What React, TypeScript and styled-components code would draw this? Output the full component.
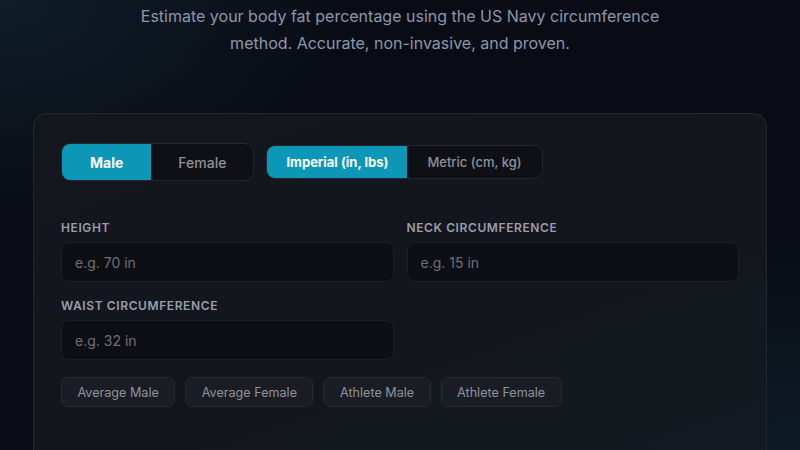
import React, { useState } from 'react';
import styled, { createGlobalStyle } from 'styled-components';

const GlobalStyle = createGlobalStyle`
    html, body {
        margin: 0;
        padding: 0;
        height: 100%;
    }
    body {
        font-family: Inter, 'Noto Sans', 'Liberation Sans', sans-serif;
        background: #0a0d16;
        overflow: hidden;
    }
`;

const Page = styled.div`
    width: 800px;
    height: 450px;
    box-sizing: border-box;
    padding-top: 3px;
    background:
        radial-gradient(ellipse 500px 300px at 0% 0%, rgba(20, 44, 56, 0.55), transparent 70%),
        radial-gradient(ellipse 500px 300px at 100% 100%, rgba(18, 42, 54, 0.5), transparent 70%),
        #090c15;
    display: flex;
    flex-direction: column;
    align-items: center;
`;

const Subtitle = styled.p`
    margin: 0;
    width: 560px;
    text-align: center;
    font-size: 16px;
    line-height: 27px;
    color: #8b97aa;
`;

const Card = styled.div`
    margin-top: 56px;
    width: 734px;
    flex: 1;
    box-sizing: border-box;
    padding: 29px 27px;
    background: linear-gradient(160deg, #15171e 0%, #14161d 60%, #131a21 100%);
    border: 1px solid rgba(255, 255, 255, 0.07);
    border-bottom: none;
    border-radius: 14px 14px 0 0;
`;

const ToggleRow = styled.div`
    display: flex;
    align-items: center;
    gap: 12px;
`;

const Segmented = styled.div<{ $h: number }>`
    display: flex;
    height: ${(p) => p.$h}px;
    border: 1px solid #24262e;
    border-radius: 9px;
    background: #0f1015;
    overflow: hidden;
    box-sizing: border-box;
`;

const Segment = styled.button<{ $active: boolean; $pad: number; $size: number }>`
    border: none;
    margin: 0;
    padding: 0 ${(p) => p.$pad}px;
    font-family: inherit;
    font-size: ${(p) => p.$size}px;
    font-weight: ${(p) => (p.$active ? 700 : 500)};
    color: ${(p) => (p.$active ? '#ffffff' : '#8d9099')};
    background: ${(p) => (p.$active ? '#0c97b6' : 'transparent')};
    cursor: pointer;
`;

const Fields = styled.div`
    margin-top: 39px;
    display: grid;
    grid-template-columns: 1fr 1fr;
    column-gap: 13px;
    row-gap: 16px;
`;

const Field = styled.div`
    display: flex;
    flex-direction: column;
    gap: 7px;
`;

const Label = styled.label`
    font-size: 12px;
    font-weight: 600;
    letter-spacing: 0.6px;
    text-transform: uppercase;
    color: #9a9eaa;
    line-height: 15px;
`;

const Input = styled.input`
    height: 40px;
    box-sizing: border-box;
    padding: 0 13px;
    border: 1px solid #1d1f26;
    border-radius: 8px;
    background: #0e0f14;
    font-family: inherit;
    font-size: 14px;
    color: #e5e7eb;
    outline: none;
    &::placeholder {
        color: #6c6f78;
    }
`;

const Presets = styled.div`
    margin-top: 17px;
    display: flex;
    gap: 10px;
`;

const PresetButton = styled.button`
    height: 30px;
    padding: 0 15.5px;
    border: 1px solid #272a31;
    border-radius: 7px;
    background: #1b1d24;
    font-family: inherit;
    font-size: 12.6px;
    color: #8e929c;
    cursor: pointer;
`;

export default function App() {
    const [sex, setSex] = useState<'male' | 'female'>('male');
    const [units, setUnits] = useState<'imperial' | 'metric'>('imperial');

    const u = units === 'imperial' ? 'in' : 'cm';

    return (
        <Page>
            <GlobalStyle />
            <Subtitle>
                Estimate your body fat percentage using the US Navy circumference method. Accurate, non-invasive, and
                proven.
            </Subtitle>
            <Card>
                <ToggleRow>
                    <Segmented $h={38}>
                        <Segment $active={sex === 'male'} $pad={28} $size={14} onClick={() => setSex('male')}>
                            Male
                        </Segment>
                        <Segment $active={sex === 'female'} $pad={27} $size={14} onClick={() => setSex('female')}>
                            Female
                        </Segment>
                    </Segmented>
                    <Segmented $h={34}>
                        <Segment
                            $active={units === 'imperial'}
                            $pad={19}
                            $size={13}
                            onClick={() => setUnits('imperial')}
                        >
                            Imperial (in, lbs)
                        </Segment>
                        <Segment
                            $active={units === 'metric'}
                            $pad={20}
                            $size={13}
                            onClick={() => setUnits('metric')}
                        >
                            Metric (cm, kg)
                        </Segment>
                    </Segmented>
                </ToggleRow>

                <Fields>
                    <Field>
                        <Label>Height</Label>
                        <Input placeholder={`e.g. 70 ${u}`} />
                    </Field>
                    <Field>
                        <Label>Neck Circumference</Label>
                        <Input placeholder={`e.g. 15 ${u}`} />
                    </Field>
                    <Field>
                        <Label>Waist Circumference</Label>
                        <Input placeholder={`e.g. 32 ${u}`} />
                    </Field>
                </Fields>

                <Presets>
                    <PresetButton>Average Male</PresetButton>
                    <PresetButton>Average Female</PresetButton>
                    <PresetButton>Athlete Male</PresetButton>
                    <PresetButton>Athlete Female</PresetButton>
                </Presets>
            </Card>
        </Page>
    );
}
